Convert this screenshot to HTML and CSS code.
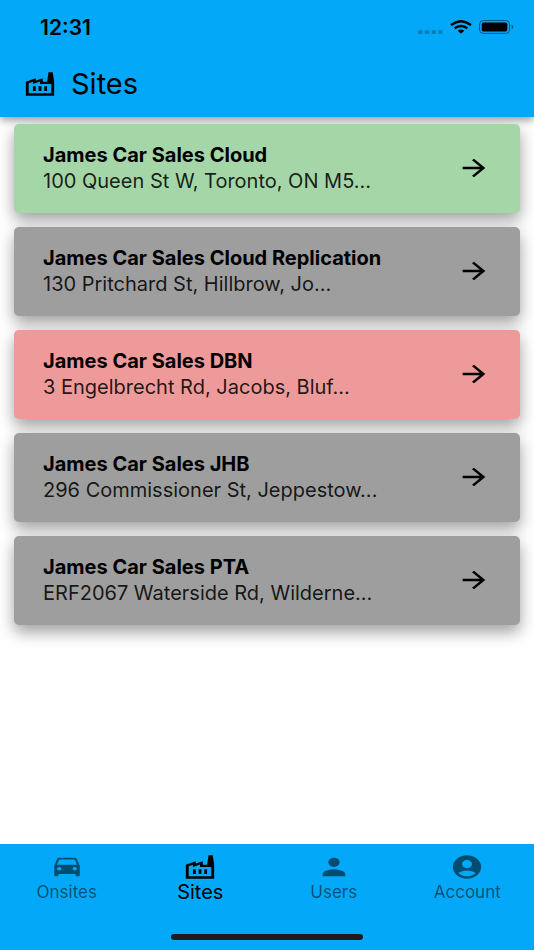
FILE: index.html
```html
<!DOCTYPE html>
<html lang="en">
<head>
    <meta charset="UTF-8">
    <meta name="viewport" content="width=device-width, initial-scale=1.0">
    <title>Sites</title>
    <link rel="stylesheet" href="styles.css">
</head>
<body>

<svg class="sprite" aria-hidden="true">
    <symbol id="icon-factory" viewBox="0 0 24 24" preserveAspectRatio="none">
        <path d="M22 22H2V10l7-3v2l5-2v3h3l1-8h3l1 8v12zM12 9.95l-5 2V10l-3 1.32V20h16v-8h-8V9.95zM11 18h2v-4h-2v4zM7 18h2v-4H7v4zM17 14h-2v4h2v-4z"/>
    </symbol>
    <symbol id="icon-arrow" viewBox="0 0 24 24" preserveAspectRatio="none">
        <path d="M12 4l-1.41 1.41L16.17 11H4v2h12.17l-5.58 5.59L12 20l8-8z"/>
    </symbol>
    <symbol id="icon-car" viewBox="0 0 24 24" preserveAspectRatio="none">
        <path d="M18.92 5.01C18.72 4.42 18.16 4 17.5 4h-11c-.66 0-1.21.42-1.42 1.01L3 11v8c0 .55.45 1 1 1h1c.55 0 1-.45 1-1v-1h12v1c0 .55.45 1 1 1h1c.55 0 1-.45 1-1v-8l-2.08-5.99zM6.5 15c-.83 0-1.5-.67-1.5-1.5S5.67 12 6.5 12s1.5.67 1.5 1.5S7.33 15 6.5 15zm11 0c-.83 0-1.5-.67-1.5-1.5s.67-1.5 1.5-1.5 1.5.67 1.5 1.5-.67 1.5-1.5 1.5zM5 10l1.5-4.5h11L19 10H5z"/>
    </symbol>
    <symbol id="icon-person" viewBox="0 0 24 24" preserveAspectRatio="none">
        <path d="M12 12c2.21 0 4-1.79 4-4s-1.79-4-4-4-4 1.79-4 4 1.79 4 4 4zm0 2c-2.67 0-8 1.34-8 4v2h16v-2c0-2.66-5.33-4-8-4z"/>
    </symbol>
    <symbol id="icon-account" viewBox="0 0 24 24" preserveAspectRatio="none">
        <path d="M12 2C6.48 2 2 6.48 2 12s4.48 10 10 10 10-4.48 10-10S17.52 2 12 2zm0 4c1.93 0 3.5 1.57 3.5 3.5S13.93 13 12 13s-3.5-1.57-3.5-3.5S10.07 6 12 6zm0 14c-2.03 0-4.43-.82-6.14-2.88C7.55 15.8 9.68 15 12 15s4.45.8 6.14 2.12C16.43 19.18 14.03 20 12 20z"/>
    </symbol>
</svg>

<header class="header">
    <div class="status-bar">
        <span class="time">12:31</span>
        <div class="status-icons">
            <svg class="signal" viewBox="0 0 25 4">
                <rect x="0" y="0" width="4.6" height="4" rx="1.6"/>
                <rect x="6.7" y="0" width="4.6" height="4" rx="1.6"/>
                <rect x="13.4" y="0" width="4.6" height="4" rx="1.6"/>
                <rect x="20.1" y="0" width="4.6" height="4" rx="1.6"/>
            </svg>
            <svg class="wifi" viewBox="0 0 22 14">
                <path class="wifi-arc" d="M1 5Q11-2.6 21 5M4.6 8.3Q11 3.5 17.4 8.3"/>
                <path d="M7.7 10.8Q11 8.4 14.3 10.8L11 13.7z"/>
            </svg>
            <svg class="battery" viewBox="0 0 35 14">
                <rect class="battery-case" x=".6" y=".6" width="30" height="12.8" rx="3.6"/>
                <rect x="2.7" y="2.6" width="25.6" height="8.8" rx="1.6"/>
                <path class="battery-tip" d="M32.6 4.8q1.8.6 1.8 2.2t-1.8 2.2z"/>
            </svg>
        </div>
    </div>
    <div class="title-bar">
        <svg class="icon"><use href="#icon-factory"/></svg>
        <h1>Sites</h1>
    </div>
</header>

<main class="site-list">
    <a href="#" class="card online">
        <div class="card-text">
            <h2>James Car Sales Cloud</h2>
            <p>100 Queen St W, Toronto, ON M5...</p>
        </div>
        <svg class="icon"><use href="#icon-arrow"/></svg>
    </a>
    <a href="#" class="card">
        <div class="card-text">
            <h2>James Car Sales Cloud Replication</h2>
            <p>130 Pritchard St, Hillbrow, Jo...</p>
        </div>
        <svg class="icon"><use href="#icon-arrow"/></svg>
    </a>
    <a href="#" class="card offline">
        <div class="card-text">
            <h2>James Car Sales DBN</h2>
            <p>3 Engelbrecht Rd, Jacobs, Bluf...</p>
        </div>
        <svg class="icon"><use href="#icon-arrow"/></svg>
    </a>
    <a href="#" class="card">
        <div class="card-text">
            <h2>James Car Sales JHB</h2>
            <p>296 Commissioner St, Jeppestow...</p>
        </div>
        <svg class="icon"><use href="#icon-arrow"/></svg>
    </a>
    <a href="#" class="card">
        <div class="card-text">
            <h2>James Car Sales PTA</h2>
            <p>ERF2067 Waterside Rd, Wilderne...</p>
        </div>
        <svg class="icon"><use href="#icon-arrow"/></svg>
    </a>
</main>

<footer class="footer">
    <nav class="tabs">
        <a href="#" class="tab">
            <svg class="icon"><use href="#icon-car"/></svg>
            <span>Onsites</span>
        </a>
        <a href="#" class="tab active" aria-current="page">
            <svg class="icon"><use href="#icon-factory"/></svg>
            <span>Sites</span>
        </a>
        <a href="#" class="tab">
            <svg class="icon"><use href="#icon-person"/></svg>
            <span>Users</span>
        </a>
        <a href="#" class="tab">
            <svg class="icon"><use href="#icon-account"/></svg>
            <span>Account</span>
        </a>
    </nav>
    <div class="home-indicator"></div>
</footer>

</body>
</html>
```
FILE: styles.css
```css
* {
    box-sizing: border-box;
}

body {
    margin: 0;
    min-height: 100vh;
    display: flex;
    flex-direction: column;
    font-family: Inter, "Liberation Sans", sans-serif;
    color: #000;
    background-color: #fff;
}

h1, h2, p {
    margin: 0;
}

a {
    color: inherit;
    text-decoration: none;
}

.sprite {
    display: none;
}

.icon {
    width: 34px;
    height: 28px;
    flex-shrink: 0;
    fill: currentColor;
}

/* Header */
.header {
    background-color: #03a9f8;
    box-shadow: 0 3px 8px rgba(0, 0, 0, 0.4);
}

.status-bar {
    height: 54px;
    padding: 0 20px 0 40px;
    display: flex;
    align-items: center;
    justify-content: space-between;
}

.time {
    font-size: 21px;
    font-weight: 600;
}

.status-icons {
    display: flex;
    align-items: center;
    gap: 7px;
}

.signal {
    width: 25px;
    height: 4px;
    margin-top: 9px;
    opacity: 0.25;
}

.wifi {
    width: 22px;
    height: 14px;
}

.wifi-arc {
    fill: none;
    stroke: #000;
    stroke-width: 2.4;
}

.battery {
    width: 35px;
    height: 14px;
}

.battery-case {
    fill: none;
    stroke: #000;
    stroke-opacity: 0.5;
}

.battery-tip {
    fill-opacity: 0.5;
}

.title-bar {
    padding: 14px 23px 17px;
    display: flex;
    align-items: center;
    gap: 14px;
}

.title-bar h1 {
    font-size: 29px;
    font-weight: 400;
    line-height: 32px;
}

/* Site cards */
.site-list {
    flex: 1;
    padding: 7px 14px 14px;
    display: flex;
    flex-direction: column;
    gap: 14px;
}

.card {
    padding: 18px 29px 19px;
    display: flex;
    align-items: center;
    justify-content: space-between;
    border-radius: 5px;
    background-color: #9e9e9e;
    box-shadow: 0 7px 16px rgba(0, 0, 0, 0.38);
}

.card.online {
    background-color: #a5d6a7;
}

.card.offline {
    background-color: #ef9a9a;
}

.card h2 {
    font-size: 20px;
    font-weight: 700;
    line-height: 26px;
}

.card p {
    font-size: 20px;
    line-height: 26px;
    color: rgba(0, 0, 0, 0.87);
}

/* Bottom navigation */
.footer {
    padding: 9px 0 10px;
    background-color: #03a9f8;
}

.tabs {
    display: flex;
}

.tab {
    flex: 1;
    display: flex;
    flex-direction: column;
    align-items: center;
    font-size: 17px;
    line-height: 22px;
    color: rgba(0, 0, 0, 0.54);
}

.tab.active {
    font-size: 20px;
    color: #000;
}

.home-indicator {
    width: 36%;
    height: 6px;
    margin: 31px auto 0;
    border-radius: 3px;
    background-color: #1c1c1e;
}
```
